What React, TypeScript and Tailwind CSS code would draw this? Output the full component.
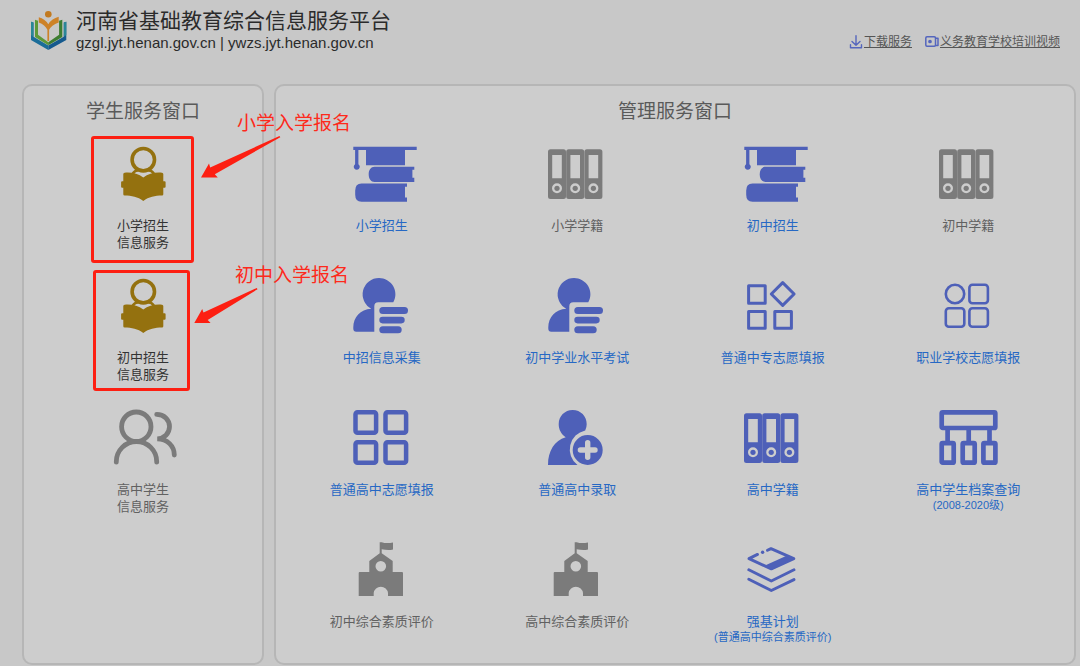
import React from "react";

type IconProps = { children: React.ReactNode };

type Service = {
  name: string;
  note?: string;
  icon: React.ReactNode;
  disabled?: boolean;
};

const Icon = ({ children }: IconProps) => (
  <svg
    viewBox="0 0 64 64"
    className="size-16 overflow-visible"
    fill="currentColor"
    aria-hidden="true"
  >
    {children}
  </svg>
);

const ReaderIcon = () => (
  <Icon>
    <circle cx="32.3" cy="17.7" r="11.2" fill="none" stroke="currentColor" strokeWidth="3.6" />
    <path
      d="M21.8 31.5c1.4-2.2 3.2-3.2 5.6-3.2M42.8 31.5c-1.4-2.2-3.2-3.2-5.6-3.2"
      fill="none"
      stroke="currentColor"
      strokeWidth="2.6"
    />
    <path d="M13.6 30.700c7-.6 13.600.8 18.700 4.800 5.100-4 11.700-5.400 18.700-4.800q1.300.1 1.300 1.400v7.200h1.300q1 0 1 1v4.400q0 1-1 1h-1.300v6.600q0 1.300-1.300 1.300c-7 0-13.200 1.400-18.700 5.400-5.500-4-11.700-5.400-18.700-5.400q-1.300 0-1.300-1.300v-6.600h-1.200q-1 0-1-1v-4.400q0-1 1-1h1.200v-7.200q0-1.300 1.300-1.400z" />
  </Icon>
);

const StudentsIcon = () => (
  <Icon>
    <g fill="none" stroke="currentColor" strokeWidth="4.8" strokeLinecap="round">
      <circle cx="25.3" cy="20.7" r="14.7" />
      <path d="M5.3 56.2v-.5a20.200 20.200 0 0 1 40.400 0v.5" />
      <path d="M45.700 8.400c7.400 0 12.800 5.300 12.800 12.200s-5.400 12.200-12.300 12.200c10.300 0 17.100 7.400 17.100 16.200" />
    </g>
  </Icon>
);

const BooksIcon = () => (
  <Icon>
    <path d="M3.300 4.700h63.400v3.300H55v15.200H16V8H8.400v14.200a3 3 0 1 1-3.300 0V8H3.300z" />
    <path d="M24.500 24.800h39.800v3H62.400v8h1.900v4.100H24.500c-3.600 0-5.800-3.200-5.800-7.500s2.200-7.600 5.800-7.600z" />
    <path d="M11.500 41.400H57v3.300h-2v10.900h2v4.100H11.500q-6.300 0-6.300-7v-4.300q0-7 6.300-7z" />
  </Icon>
);

const BindersIcon = () => (
  <Icon>
    {[3, 21.2, 39.4].map((x) => (
      <g key={x} transform={`translate(${x} 7.3)`}>
        <path
          fillRule="evenodd"
          d="M2.500 0h13q2.500 0 2.500 2.500v44.600q0 2.500-2.500 2.500h-13q-2.500 0-2.500-2.500V2.500q0-2.500 2.500-2.500zM4.200 5.800v23.200h9.600V5.800zM9 34a5 5 0 1 0 0 10 5 5 0 0 0 0-10z"
        />
        <circle cx="9" cy="39" r="2.6" />
      </g>
    ))}
  </Icon>
);

const UserListIcon = () => (
  <Icon>
    <path d="M29 4a16.300 16.300 0 0 1 14.300 24.300H28.300q-4 0-4 4V57.700H6.300q-3 0-3-3v-1.500c0-9.700 7-18 18-18.500A16.300 16.300 0 0 1 29 4z" />
    <rect x="29.3" y="33" width="28.7" height="7" rx="3.5" />
    <rect x="29.3" y="42.700" width="25.4" height="6.7" rx="3.3" />
    <rect x="29.3" y="52.3" width="22.4" height="7" rx="3.5" />
  </Icon>
);

const SquaresDiamondIcon = () => (
  <Icon>
    <g fill="none" stroke="currentColor" strokeWidth="3" strokeLinejoin="round">
      <rect x="7.6" y="11.8" width="16.6" height="17.4" />
      <rect x="7.6" y="37.6" width="16.6" height="16.6" />
      <rect x="33.8" y="37.6" width="16.6" height="16.6" />
      <path d="M41.700 8.600 53.100 20 41.700 31.400 30.300 20z" />
    </g>
  </Icon>
);

const CircleSquaresIcon = () => (
  <Icon>
    <g fill="none" stroke="currentColor" strokeWidth="2.6">
      <circle cx="19" cy="20" r="9.2" />
      <rect x="33.4" y="10.8" width="18.5" height="18.5" rx="3" />
      <rect x="9.8" y="34.2" width="18.5" height="18.5" rx="3" />
      <rect x="33.4" y="34.2" width="18.5" height="18.5" rx="3" />
    </g>
  </Icon>
);

const GridIcon = () => (
  <Icon>
    <g fill="none" stroke="currentColor" strokeWidth="4.5">
      <rect x="5.5" y="6.2" width="20.6" height="20.6" rx="2" />
      <rect x="35.5" y="6.2" width="20.6" height="20.6" rx="2" />
      <rect x="5.5" y="36.2" width="20.6" height="20.6" rx="2" />
      <rect x="35.5" y="36.2" width="20.6" height="20.6" rx="2" />
    </g>
  </Icon>
);

const UserPlusIcon = () => (
  <Icon>
    <path d="M27.700 4c8 0 14 6.200 14 14.200q0 3.300-1.500 6.200A19.500 19.500 0 0 0 32.500 59H3c0-14 6.500-24.500 17.700-27.700-4.500-3.300-7-7.700-7-13.100C13.700 10.200 19.700 4 27.700 4z" />
    <path
      fillRule="evenodd"
      d="M42.700 29a15 15 0 1 0 0 30 15 15 0 0 0 0-30zM42.700 34q2.700 0 2.700 2.700v4.600h4.600q2.700 0 2.700 2.700t-2.700 2.700h-4.600v4.600q0 2.700-2.700 2.700t-2.700-2.700v-4.600h-4.600q-2.700 0-2.700-2.700t2.700-2.700h4.600v-4.600q0-2.700 2.700-2.700z"
    />
  </Icon>
);

const ArchiveTreeIcon = () => (
  <Icon>
    <g fill="none" stroke="currentColor" strokeWidth="4.7">
      <rect x="5.7" y="6.4" width="53.6" height="15.6" rx="1" />
      <rect x="5.7" y="37.1" width="12" height="19.6" rx="1" />
      <rect x="26.7" y="37.1" width="12" height="19.6" rx="1" />
      <rect x="47.4" y="37.1" width="12" height="19.6" rx="1" />
      <path d="M11.600 23v13M32.700 23v13M53.500 23v13" />
    </g>
  </Icon>
);

const SchoolIcon = () => (
  <Icon>
    <path
      fillRule="evenodd"
      d="M29.700 4.300h2c3.800 1.200 7.500.9 11.300.2v7c-3.800 1-7.500.4-11.300-.2v4L42.700 23v11H52q1 0 1 1v23H38v-3a7.200 7.200 0 0 0-14.300 0v3H8.700V35q0-1 1-1h9.600V23l10.400-7.700zM30.800 23a5.300 5.300 0 1 0 0 10.600 5.300 5.300 0 0 0 0-10.600z"
    />
  </Icon>
);

const StackIcon = () => (
  <Icon>
    <g
      fill="none"
      stroke="currentColor"
      strokeWidth="2.9"
      strokeLinecap="round"
      strokeLinejoin="round"
    >
      <path d="M26.500 12.300 30 10.600l22.800 10-22.500 10.300L8 20.600l8.500-4.200" />
      <path d="M7.800 31.800 30.300 43 53 31.800M7.800 41.200l22.500 11.300L53 41.600" />
    </g>
    <circle cx="21.6" cy="14.3" r="1.7" />
    <path d="m24 27.500 21-9.500 8.500 2.800L30.300 32z" />
  </Icon>
);

const Logo = () => (
  <svg viewBox="0 0 38 40" className="h-10 w-[38px]" aria-hidden="true">
    <path d="M1 11.700l2.500.8v14.300l14.800 8.700V40L1 30z" fill="#1b6d99" />
    <path d="M36.300 11.700l-2.500.8v14.300l-15.500 8.700V40l18-10z" fill="#155a8e" />
    <path d="M1 11.700l2.500.8v14.300L1 25zM36.300 11.700l-2.500.8v14.300l2.500-1.800z" fill="#2a8797" />
    <path d="M5 9.700l3 1v14l10.300 7.500v3L5 27z" fill="#5f9938" />
    <path d="M32.300 9.700l-3.200 1v14l-10.800 7.500v3l14-8.200z" fill="#3e7d31" />
    <circle cx="18.3" cy="4.2" r="3.3" fill="#c27a20" />
    <path
      d="M8.800 7.200q6 1.400 9.500 7 3.500-5.600 10.400-7.400v5.600q-7.600 2.600-9.600 7.400V31h-1.700V19.800Q15 15 8.800 12.600z"
      fill="#cd8228"
    />
  </svg>
);

const DownloadIcon = () => (
  <svg
    viewBox="0 0 14 14"
    className="size-[14px] text-[#5566bd]"
    fill="none"
    stroke="currentColor"
    strokeWidth="1.400"
    strokeLinecap="round"
    strokeLinejoin="round"
    aria-hidden="true"
  >
    <path d="M7 .8v9.400M3 6.400l4 3.900 4-3.900M1.500 9.700v3h11v-3" />
  </svg>
);

const VideoIcon = () => (
  <svg
    viewBox="0 0 14 14"
    className="size-[14px] text-[#5566bd]"
    fill="none"
    stroke="currentColor"
    strokeWidth="1.500"
    strokeLinejoin="round"
    aria-hidden="true"
  >
    <rect x=".8" y="1.7" width="9.700" height="9.6" rx="1.2" />
    <path d="M10.500 3.200H13v7.200h-2.500" />
    <circle cx="5" cy="6.500" r="1.100" fill="currentColor" />
  </svg>
);

const managementServices: Service[] = [
  { name: "小学招生", icon: <BooksIcon /> },
  { name: "小学学籍", icon: <BindersIcon />, disabled: true },
  { name: "初中招生", icon: <BooksIcon /> },
  { name: "初中学籍", icon: <BindersIcon />, disabled: true },
  { name: "中招信息采集", icon: <UserListIcon /> },
  { name: "初中学业水平考试", icon: <UserListIcon /> },
  { name: "普通中专志愿填报", icon: <SquaresDiamondIcon /> },
  { name: "职业学校志愿填报", icon: <CircleSquaresIcon /> },
  { name: "普通高中志愿填报", icon: <GridIcon /> },
  { name: "普通高中录取", icon: <UserPlusIcon /> },
  { name: "高中学籍", icon: <BindersIcon /> },
  { name: "高中学生档案查询", note: "(2008-2020级)", icon: <ArchiveTreeIcon /> },
  { name: "初中综合素质评价", icon: <SchoolIcon />, disabled: true },
  { name: "高中综合素质评价", icon: <SchoolIcon />, disabled: true },
  { name: "强基计划", note: "(普通高中综合素质评价)", icon: <StackIcon /> },
];

const ServiceLink = ({ service }: { service: Service }) => (
  <a
    href="#"
    className="flex h-[132px] flex-col items-center pt-2 text-center text-[13px] leading-[17px]"
  >
    <span className={service.disabled ? "text-[#7b7b7b]" : "text-[#4e60b8]"}>
      {service.icon}
    </span>
    <span
      className={
        service.disabled ? "mt-[11px] text-[#616161]" : "mt-[11px] text-[#2668c4]"
      }
    >
      {service.name}
      {service.note && (
        <span className="block text-[11px] leading-[15px]">{service.note}</span>
      )}
    </span>
  </a>
);

const StudentLink = ({ name, children }: { name: string; children: React.ReactNode }) => (
  <a
    href="#"
    className="flex h-[132px] flex-col items-center pt-2 text-center text-[13px] leading-[17px]"
  >
    {children}
    <span className="mt-[11px]">
      {name}
      <br />
      信息服务
    </span>
  </a>
);

const App = () => {
  return (
    <div className="min-h-screen bg-[#c8c8c8] font-['Liberation_Sans','Noto_Sans_CJK_SC',sans-serif]">
      <header className="flex h-[84px] items-start justify-between pr-5 pl-[30px]">
        <div className="flex gap-2 pt-[10px]">
          <Logo />
          <div className="text-[#2b2b2b]">
            <h1 className="text-[21px] leading-[22px]">河南省基础教育综合信息服务平台</h1>
            <p className="text-[15px] leading-[22px]">
              gzgl.jyt.henan.gov.cn | ywzs.jyt.henan.gov.cn
            </p>
          </div>
        </div>
        <nav className="flex gap-[13px] pt-[33px] text-xs leading-[18px] text-[#555]">
          <a href="#" className="flex items-center gap-px">
            <DownloadIcon />
            <span className="underline">下载服务</span>
          </a>
          <a href="#" className="flex items-center gap-px">
            <VideoIcon />
            <span className="underline">义务教育学校培训视频</span>
          </a>
        </nav>
      </header>

      <main className="flex gap-[10px] pr-1 pb-px pl-[22px]">
        <section className="w-[242px] shrink-0 rounded-[10px] border-2 border-[#b6b6b6] bg-[#cdcdcd] pt-3 pb-px">
          <h2 className="mb-2 text-center text-[19px] leading-7 text-[#5a5a5a]">
            学生服务窗口
          </h2>
          <div className="relative text-[#333]">
            <StudentLink name="小学招生">
              <span className="text-[#94710f]">
                <ReaderIcon />
              </span>
            </StudentLink>
            <div className="pointer-events-none absolute top-[2px] left-[67px] h-[127px] w-[103px] rounded-[3px] border-3 border-[#fd1f12]" />
            <svg
              viewBox="0 0 80 42"
              className="pointer-events-none absolute top-[2px] left-[177px] h-[42px] w-20 text-[#fd1f12]"
              fill="currentColor"
              aria-hidden="true"
            >
              <path d="M0 41.500 8 27.500l1.200 4L78.500 0l.8 1.200L13.800 38.300l3 3.200z" />
            </svg>
            <p className="pointer-events-none absolute -top-6 left-[213px] text-[19px] leading-7 whitespace-nowrap text-[#fd2a1c]">
              小学入学报名
            </p>
          </div>
          <div className="relative text-[#333]">
            <StudentLink name="初中招生">
              <span className="text-[#94710f]">
                <ReaderIcon />
              </span>
            </StudentLink>
            <div className="pointer-events-none absolute top-[4px] left-[69px] h-[121px] w-[97px] rounded-[3px] border-3 border-[#fd1f12]" />
            <svg
              viewBox="0 0 64 36"
              className="pointer-events-none absolute top-[22px] left-[170px] h-9 w-16 text-[#fd1f12]"
              fill="currentColor"
              aria-hidden="true"
            >
              <path d="M.3 35 8.200 21l1.300 3.600L62.800 0l.7 1.200L13.700 32l2.900 3z" />
            </svg>
            <p className="pointer-events-none absolute -top-1 left-[211px] text-[19px] leading-7 whitespace-nowrap text-[#fd2a1c]">
              初中入学报名
            </p>
          </div>
          <div className="text-[#616161]">
            <StudentLink name="高中学生">
              <span className="text-[#7b7b7b]">
                <StudentsIcon />
              </span>
            </StudentLink>
          </div>
        </section>

        <section className="flex-1 rounded-[10px] border-2 border-[#b6b6b6] bg-[#cdcdcd] px-2 pt-3 pb-px">
          <h2 className="mb-2 text-center text-[19px] leading-7 text-[#5a5a5a]">
            管理服务窗口
          </h2>
          <div className="grid grid-cols-4">
            {managementServices.map((service) => (
              <ServiceLink key={service.name} service={service} />
            ))}
          </div>
        </section>
      </main>
    </div>
  );
};

export default App;
